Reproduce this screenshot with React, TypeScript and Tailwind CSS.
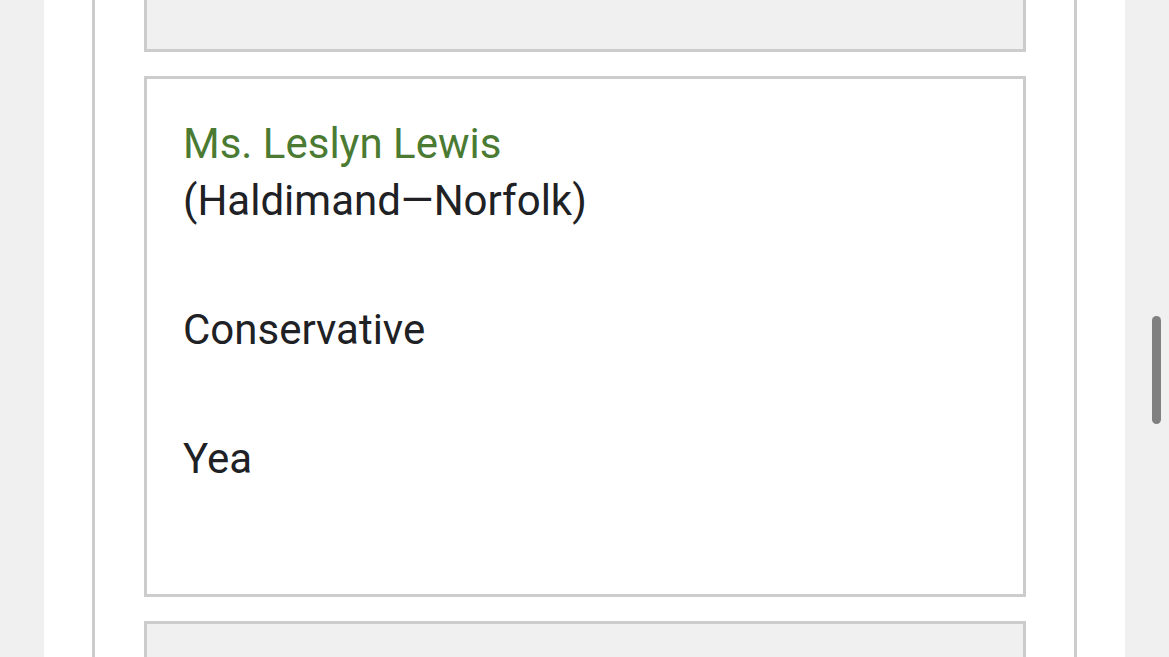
const members = [
  {
    name: 'Ms. Leslyn Lewis',
    riding: '(Haldimand\u2014Norfolk)',
    party: 'Conservative',
    vote: 'Yea',
  },
];

function Placeholder({ edge }: { edge: 'top' | 'bottom' }) {
  return (
    <div
      className={
        edge === 'top'
          ? 'shrink-0 h-[52px] bg-[#f0f0f0] border-[3px] border-t-0 border-[#cccccc]'
          : 'shrink-0 h-[60px] bg-[#f0f0f0] border-[3px] border-b-0 border-[#cccccc]'
      }
    />
  );
}

function MemberCard({ name, riding, party, vote }: (typeof members)[number]) {
  return (
    <div className="shrink-0 bg-white border-[3px] border-[#cccccc] pt-[36px] pb-[35px] pl-[36px] pr-[36px] text-[42px] leading-[57px] text-[#202124]">
      <div className="mb-[72px]">
        <div className="text-[#4b7b32]">{name}</div>
        <div>{riding}</div>
      </div>
      <div className="mb-[72px]">{party}</div>
      <div className="mb-[72px]">{vote}</div>
    </div>
  );
}

export default function App() {
  return (
    <div
      className="relative h-[657px] overflow-hidden bg-[#f0f0f0] px-[44px]"
      style={{ fontFamily: 'Roboto, "Noto Sans", sans-serif' }}
    >
      <div className="h-full bg-white px-[48px]">
        <div className="h-full border-x-[3px] border-[#cccccc] pl-[49px] pr-[48px] flex flex-col gap-[24px]">
          <Placeholder edge="top" />
          {members.map((m) => (
            <MemberCard key={m.name} {...m} />
          ))}
          <Placeholder edge="bottom" />
        </div>
      </div>
      {/* scroll thumb */}
      <div className="absolute left-[1152px] top-[316px] w-[9px] h-[108px] rounded-full bg-[#808080]" />
    </div>
  );
}
